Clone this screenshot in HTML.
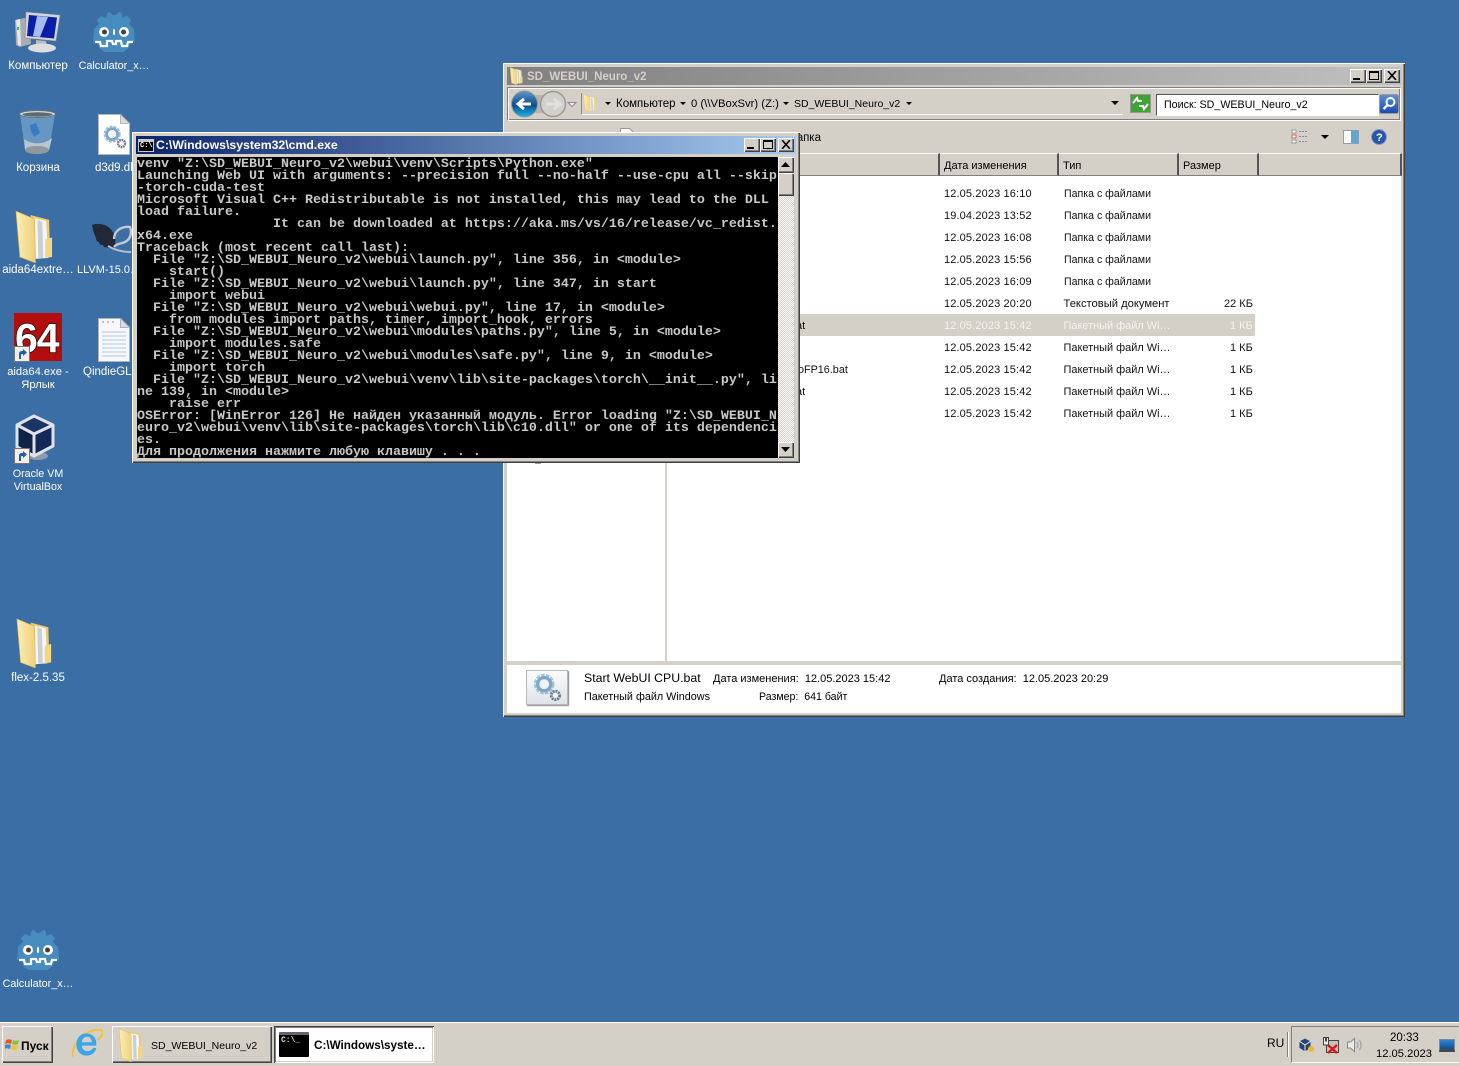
<!DOCTYPE html>
<html lang="ru"><head><meta charset="utf-8"><title>Desktop</title>
<style>
html,body{margin:0;padding:0}
body{width:1459px;height:1066px;position:relative;overflow:hidden;background:#3a6ea5;font-family:"Liberation Sans",sans-serif;font-size:11px;color:#000}
div,span,svg{position:absolute;box-sizing:border-box}
.t{white-space:nowrap;line-height:14px}
.lb{color:#fff;text-align:center;width:76px;line-height:13px;font-size:11.5px;white-space:nowrap;overflow:hidden}
.raised{background:#d4d0c8;box-shadow:inset 1px 1px #fff,inset -1px -1px #404040,inset -2px -2px #808080}
.tb{background:#d4d0c8;width:16px;height:14px;box-shadow:inset 1px 1px #fff,inset -1px -1px #404040,inset -2px -2px #808080}
.row{left:0;width:100%;height:22px;line-height:22px;font-size:11px;color:#111}
.row span{white-space:nowrap;top:0}
.row span.d{left:276px;letter-spacing:.13px}
.row span.f{left:396px;font-size:10.6px}
.row span.p{left:395.5px;font-size:10.95px}
.row span.k{left:562px}
.hd{top:153px;height:23px;background:#d4d0c8;border-right:2px solid #555;border-bottom:1px solid #808080;border-top:1px solid #fff;line-height:24px;font-size:11px;padding-left:4px}
#con{left:137px;top:157px;width:641px;height:301px;padding-top:2px;background:#000;color:#c8c8c8;font:bold 13.33px/12px "Liberation Mono","DejaVu Sans Mono",monospace;white-space:pre;overflow:hidden}
</style></head><body>

<svg width="0" height="0" style="left:0;top:0"><defs>
<linearGradient id="fg" x1="0" y1="0" x2="1" y2="0"><stop offset="0" stop-color="#fbeeb4"/><stop offset="1" stop-color="#efd07c"/></linearGradient>
<symbol id="godot" viewBox="0 0 42 42">
<path d="M14 3L16 .5 20 4H23L27 .5 29 3V7L34 5 38 9 36 13 41 18 42 31H37L36 37 30 41H12L6 37 5 31H0L1 18 6 13 4 9 8 5 13 7z" fill="#478cbf"/>
<path d="M2 31H7L8 35H14V30H19L20 33H23V30H28L29 35H34L35 31H40" fill="none" stroke="#fff" stroke-width="2.2"/>
<circle cx="11" cy="21" r="5" fill="#fff"/><circle cx="31" cy="21" r="5" fill="#fff"/>
<circle cx="11.5" cy="21" r="2.5" fill="#414042"/><circle cx="30.5" cy="21" r="2.5" fill="#414042"/>
<rect x="20" y="18" width="2" height="6" rx="1" fill="#fff"/>
</symbol>
<symbol id="folder" viewBox="0 0 40 54">
<path d="M16 5l19 5 1 38-19 2z" fill="#ecca6c"/>
<path d="M19 8l13 3 2 38-14 1z" fill="#f6f6f6"/>
<path d="M23 10l5 2 1 37-5 0z" fill="#c9cfd2"/>
<path d="M31 30l7-2v20l-7 1z" fill="#f3d67f"/>
<path d="M1 1l19 8 1 45L5 48z" fill="url(#fg)" stroke="#dcb457" stroke-width=".7"/>
</symbol>
<symbol id="gears" viewBox="0 0 32 32">
<circle cx="13" cy="13" r="8.5" fill="none" stroke="#9ec3de" stroke-width="5" stroke-dasharray="3.4 1.2"/>
<circle cx="13" cy="13" r="7" fill="none" stroke="#7fa6c6" stroke-width="3.4"/>
<circle cx="13" cy="13" r="4" fill="#eef3f7"/>
<circle cx="25" cy="25" r="4.5" fill="none" stroke="#6f7f8c" stroke-width="3" stroke-dasharray="2.2 .8"/>
<circle cx="25" cy="25" r="2.2" fill="#eef3f7"/>
</symbol>
<symbol id="sc" viewBox="0 0 16 16">
<rect x=".5" y=".5" width="15" height="15" fill="#f2efe9" stroke="#777"/>
<path d="M5 13V8c0-2 1-3 3-3h1V3l4 3.500-4 3.500V8H8c-1 0-1 .5-1 1v4z" fill="#1d5fb0"/>
</symbol>
</defs></svg>

<!-- Desktop icons -->
<svg style="left:14px;top:10px" width="48" height="44" viewBox="0 0 48 44">
<path d="M1 10l14-3 2 27-11 3-4-2z" fill="#a9adb2"/><path d="M2 10l4-1 1 27-3-1z" fill="#e6e8ea"/><rect x="3" y="17" width="2" height="3" fill="#3c3"/>
<path d="M12 2l34 3-4 26-31-3z" fill="#d2d4d8" stroke="#85898e" stroke-width=".6"/>
<path d="M15 5l28 2.500-3 21-27-2.500z" fill="#0a1fa8"/><path d="M23 6l11 1-8 20-7-1z" fill="#a6bcf2"/>
<path d="M22 30l10 1 1 5-11-1z" fill="#b9bbbd"/><ellipse cx="28" cy="38" rx="14" ry="4.500" fill="#dcdedf"/>
</svg>
<svg style="left:93px;top:11px" width="42" height="42"><use href="#godot"/></svg>
<div class="lb" style="left:0;top:60px">Компьютер</div>
<div class="lb" style="left:76px;top:60px;font-size:10.8px">Calculator_x…</div>

<svg style="left:18px;top:109px" width="40" height="48" viewBox="0 0 40 48">
<path d="M2 5l5 36c4 5 20 5 24 0l6-36z" fill="#6f9fc8" opacity=".85"/>
<path d="M6 30c8 6 20 6 28-1l-3 12c-4 5-20 5-24 0z" fill="#b9c6cf"/>
<path d="M12 16l6-2 4 10-6 4-3-6z" fill="#2f73c4" opacity=".8"/>
<ellipse cx="19.500" cy="5" rx="18" ry="3.500" fill="#cfd6da" stroke="#6b7479"/>
<ellipse cx="19.500" cy="5.500" rx="15" ry="2.200" fill="#5d6a72"/>
<ellipse cx="19" cy="41" rx="12" ry="4" fill="#8f989d"/>
</svg>
<svg style="left:98px;top:114px" width="34" height="42" viewBox="0 0 34 42">
<path d="M.5.5h22l9 9v31H.500z" fill="#fff" stroke="#b5b5b5"/><path d="M22.500.5v9h9z" fill="#ddd" stroke="#b5b5b5"/>
<use href="#gears" x="4" y="10" width="25" height="25"/>
</svg>
<div class="lb" style="left:0;top:162px">Корзина</div>
<div class="t" style="left:95px;top:161px;color:#fff;font-size:11.5px">d3d9.dll</div>

<svg style="left:15px;top:210px" width="39" height="53"><use href="#folder"/></svg>
<svg style="left:92px;top:222px" width="42" height="32" viewBox="0 0 42 32">
<path d="M0 3c8-3 18 0 22 9 2 6 2 11-1 15-2-2-5 0-6-2-1 1-4 0-4-2-3 0-4-1-4-3-2 0-3-2-3-4C2 12 1 8 0 3z" fill="#222837"/>
<path d="M22 17c0-7 6-13 16-12 2 5 1 12-5 15-4 2-8 1-11 5" fill="none" stroke="#c0c8d2" stroke-width="2.400"/>
<path d="M16 24c5 3 12 6 23 6" fill="none" stroke="#b6bcc8" stroke-width="2"/>
</svg>
<div class="lb" style="left:0;top:264px">aida64extre…</div>
<div class="t" style="left:77px;top:263px;color:#fff;font-size:11px">LLVM-15.0…</div>

<div style="left:14px;top:313px;width:48px;height:48px;background:#b30d0d"></div>
<svg style="left:14px;top:313px" width="48" height="48" viewBox="0 0 48 48">
<text x="1" y="39" font-family="Liberation Sans" font-weight="bold" font-size="41" fill="#fff" stroke="#111" stroke-width="1.500" paint-order="stroke" letter-spacing="-1">64</text>
</svg>
<svg style="left:14px;top:346px" width="16" height="16"><use href="#sc"/></svg>
<svg style="left:98px;top:318px" width="32" height="44" viewBox="0 0 32 44">
<path d="M.5.5h22l9 9v34H.5z" fill="#f6f8fb" stroke="#aeb4ba"/><path d="M22.500.5v9h9z" fill="#ddd" stroke="#aeb4ba"/>
<path d="M4 14h24M4 18h24M4 22h24M4 26h24M4 30h24M4 34h24M4 38h24" stroke="#b7c9de"/>
<path d="M4 4h2M9 4h2M14 4h2" stroke="#888"/>
</svg>
<div class="lb" style="left:0;top:366px;font-size:11.2px">aida64.exe -<br>Ярлык</div>
<div class="t" style="left:83px;top:365px;color:#fff;font-size:11.5px">QindieGL.l</div>

<svg style="left:14px;top:414px" width="44" height="48" viewBox="0 0 44 48">
<ellipse cx="24" cy="42" rx="10" ry="4" fill="#8d9aa8"/>
<path d="M3 11L20 20V42L3 33z" fill="#0f2347"/><path d="M39 11L20 20V42L39 32z" fill="#14295a"/>
<path d="M20 2L39 11 20 20 3 11z" fill="#1c3564"/>
<path d="M20 2L39 11V32L20 42 3 33V11zM3 11L20 20 39 11M20 20V42" fill="none" stroke="#dfe3e9" stroke-width="3" stroke-linejoin="round"/>
</svg>
<svg style="left:14px;top:448px" width="16" height="16"><use href="#sc"/></svg>
<div class="lb" style="left:0;top:468px;font-size:10.7px">Oracle VM<br>VirtualBox</div>

<svg style="left:16px;top:618px" width="37" height="50"><use href="#folder"/></svg>
<div class="lb" style="left:0;top:672px">flex-2.5.35</div>

<svg style="left:17px;top:929px" width="42" height="42"><use href="#godot"/></svg>
<div class="lb" style="left:0;top:978px;font-size:10.8px">Calculator_x…</div>

<!-- Explorer -->
<div class="raised" style="left:503px;top:63px;width:902px;height:654px"></div>
<div style="left:507px;top:67px;width:894px;height:18px;background:linear-gradient(90deg,#808080,#c0c0c0)"></div>
<svg style="left:509px;top:67px" width="15" height="18"><use href="#folder"/></svg>
<div class="t" style="left:527px;top:70px;color:#d4d0c8;font-weight:bold;font-size:11.500px">SD_WEBUI_Neuro_v2</div>
<div class="tb" style="left:1350px;top:69px"></div><div style="left:1353px;top:78px;width:7px;height:2px;background:#000"></div>
<div class="tb" style="left:1366px;top:69px"></div><div style="left:1369px;top:71px;width:10px;height:9px;border:1px solid #000;border-top-width:2px"></div>
<div class="tb" style="left:1384px;top:69px"></div>
<svg style="left:1387px;top:71px" width="10" height="9"><path d="M1 0l8 9M9 0L1 9" stroke="#000" stroke-width="1.600"/></svg>

<div style="left:507px;top:87px;width:894px;height:34px;border:1px solid;border-color:#808080 #fff #fff #808080;background:#d4d0c8;box-shadow:inset 1px 1px #fff,inset -1px -1px #808080"></div>
<svg style="left:510px;top:90px" width="72" height="28" viewBox="0 0 72 28">
<defs><linearGradient id="bb" x1="0" y1="0" x2="0" y2="1"><stop offset="0" stop-color="#5f97c8"/><stop offset=".55" stop-color="#0c4d8e"/><stop offset="1" stop-color="#19b6ea"/></linearGradient></defs>
<rect x="14" y="5" width="30" height="18" fill="#b9b6ae"/>
<circle cx="14.500" cy="14" r="13" fill="url(#bb)" stroke="#9a988f"/>
<path d="M21 14H10M14 9l-6 5 6 5" fill="none" stroke="#fff" stroke-width="3"/>
<circle cx="43" cy="14" r="12.500" fill="#d2d0cb" stroke="#9c9a94" stroke-width="1.500"/>
<path d="M36 14h12M44 9l6 5-6 5" fill="none" stroke="#e2e1dc" stroke-width="3"/>
<path d="M58 12.500h8l-4 4z" fill="#f2f2f2" stroke="#8a8a8a"/>
</svg>
<div style="left:581px;top:93px;width:542px;height:22px;background:#d4d0c8;border-left:1px solid #8a8a8a;border-bottom:1px solid #fff"></div>
<svg style="left:583px;top:94px" width="14" height="18"><use href="#folder"/></svg>
<div class="t" style="left:616px;top:97px;font-size:11.500px">Компьютер</div>
<div class="t" style="left:691px;top:97px;font-size:11.3px">0 (\\VBoxSvr) (Z:)</div>
<div class="t" style="left:794px;top:97px;font-size:10.5px">SD_WEBUI_Neuro_v2</div>
<svg style="left:600px;top:99px" width="320" height="10"><g fill="#000"><path d="M5 3h6l-3 3z"/><path d="M80 3h6l-3 3z"/><path d="M183 3h6l-3 3z"/><path d="M306 3h6l-3 3z"/></g></svg>
<svg style="left:1111px;top:101px" width="10" height="6"><path d="M0 0h8L4 4z" fill="#000"/></svg>
<svg style="left:1130px;top:94px" width="21" height="19" viewBox="0 0 21 19">
<rect x=".5" y=".5" width="20" height="18" fill="#3fa33a" stroke="#9a988f"/>
<path d="M3 9l4-5 1 3h4M18 10l-4 5-1-3H9" fill="none" stroke="#fff" stroke-width="2"/>
</svg>
<div style="left:1156px;top:94px;width:223px;height:22px;background:#fff;border:1px solid;border-color:#555 #fff #fff #555"></div>
<div class="t" style="left:1164px;top:98px;font-size:10.7px">Поиск: SD_WEBUI_Neuro_v2</div>
<svg style="left:1379px;top:94px" width="20" height="20" viewBox="0 0 20 20">
<defs><linearGradient id="sb" x1="0" y1="0" x2="0" y2="1"><stop offset="0" stop-color="#5b8fdf"/><stop offset="1" stop-color="#174bb0"/></linearGradient></defs>
<rect x=".5" y=".5" width="19" height="19" rx="2" fill="url(#sb)" stroke="#9c9a94"/>
<circle cx="11.500" cy="8" r="4" fill="none" stroke="#fff" stroke-width="2"/><path d="M8.500 11l-4 4" stroke="#fff" stroke-width="2.400"/>
</svg>

<div style="left:507px;top:121px;width:894px;height:32px;background:#d4d0c8"></div>
<svg style="left:620px;top:128px" width="16" height="8"><path d="M.5 8V.5h9l4 4V8" fill="#fff" stroke="#999"/></svg>
<div class="t" style="left:800px;top:131px;width:21px;overflow:hidden;font-size:11.500px;direction:rtl">апка</div>
<svg style="left:1291px;top:129px" width="100" height="16" viewBox="0 0 100 16">
<g fill="none" stroke="#7d8ea3"><path d="M8 2.500h8M8 7.500h8M8 12.500h8" stroke-dasharray="2 1"/></g>
<rect x="1" y="1" width="4" height="3" fill="#fff" stroke="#7a7a7a" stroke-width=".7"/><rect x="1" y="6" width="4" height="3" fill="#fff" stroke="#c33" stroke-width=".7"/><rect x="1" y="11" width="4" height="3" fill="#fff" stroke="#7a7a7a" stroke-width=".7"/>
<path d="M30 6h8l-4 4z" fill="#000"/>
<rect x="52.500" y="1.500" width="15" height="13" fill="#fff" stroke="#8aa0b5"/><rect x="60" y="2" width="7" height="12" fill="#5fa5d8"/>
<circle cx="88" cy="8" r="7.500" fill="#2a56a8" stroke="#8aa0c5"/>
<text x="85" y="12" font-family="Liberation Sans" font-weight="bold" font-size="11" fill="#fff">?</text>
</svg>

<div class="hd" style="left:507px;width:433px"></div>
<div class="hd" style="left:940px;width:119px">Дата изменения</div>
<div class="hd" style="left:1059px;width:120px">Тип</div>
<div class="hd" style="left:1179px;width:80px">Размер</div>
<div class="hd" style="left:1259px;width:143px"></div>

<div style="left:507px;top:176px;width:894px;height:485px;background:#fff"></div>
<div style="left:665px;top:176px;width:2px;height:485px;background:#d4d0c8"></div>
<div style="left:668px;top:314px;width:587px;height:22px;background:#d4d0c8"></div>
<div style="left:535px;top:458px;width:6px;height:6px;border-bottom:1px solid #999"></div>

<div style="left:668px;top:183px;width:733px;height:242px">
<div class="row" style="top:0"><span class="d">12.05.2023 16:10</span><span class="f">Папка с файлами</span></div>
<div class="row" style="top:22px"><span class="d">19.04.2023 13:52</span><span class="f">Папка с файлами</span></div>
<div class="row" style="top:44px"><span class="d">12.05.2023 16:08</span><span class="f">Папка с файлами</span></div>
<div class="row" style="top:66px"><span class="d">12.05.2023 15:56</span><span class="f">Папка с файлами</span></div>
<div class="row" style="top:88px"><span class="d">12.05.2023 16:09</span><span class="f">Папка с файлами</span></div>
<div class="row" style="top:110px"><span class="d">12.05.2023 20:20</span><span class="p" style="font-size:11.2px">Текстовый документ</span><span style="left:556px">22 КБ</span></div>
<div class="row" style="top:132px;color:#f4f3ef"><span style="left:128px;color:#111">at</span><span class="d">12.05.2023 15:42</span><span class="p">Пакетный файл Wi…</span><span class="k">1 КБ</span></div>
<div class="row" style="top:154px"><span class="d">12.05.2023 15:42</span><span class="p">Пакетный файл Wi…</span><span class="k">1 КБ</span></div>
<div class="row" style="top:176px"><span style="left:130px;font-size:10.8px">oFP16.bat</span><span class="d">12.05.2023 15:42</span><span class="p">Пакетный файл Wi…</span><span class="k">1 КБ</span></div>
<div class="row" style="top:198px"><span style="left:128px">at</span><span class="d">12.05.2023 15:42</span><span class="p">Пакетный файл Wi…</span><span class="k">1 КБ</span></div>
<div class="row" style="top:220px"><span class="d">12.05.2023 15:42</span><span class="p">Пакетный файл Wi…</span><span class="k">1 КБ</span></div>
</div>

<div style="left:507px;top:661px;width:894px;height:4px;background:#d4d0c8"></div>
<div style="left:507px;top:665px;width:894px;height:48px;background:#fff"></div>
<div style="left:526px;top:670px;width:42px;height:35px;background:linear-gradient(#fbfbfb,#dfe3e8);border:1px solid #b5b8bb;box-shadow:1px 1px 1px #888"></div>
<svg style="left:532px;top:672px" width="30" height="30"><use href="#gears"/></svg>
<div class="t" style="left:584px;top:671px;font-size:12.3px">Start WebUI CPU.bat</div>
<div class="t" style="left:713px;top:672px">Дата изменения:&nbsp; 12.05.2023 15:42</div>
<div class="t" style="left:939px;top:672px">Дата создания:&nbsp; 12.05.2023 20:29</div>
<div class="t" style="left:584px;top:690px;font-size:10.8px">Пакетный файл Windows</div>
<div class="t" style="left:759px;top:690px;font-size:10.6px">Размер:&nbsp; 641 байт</div>

<!-- CMD -->
<div class="raised" style="left:132px;top:132px;width:668px;height:331px"></div>
<div style="left:136px;top:136px;width:660px;height:18px;background:linear-gradient(90deg,#0a246a,#a6caf0)"></div>
<div style="left:138px;top:139px;width:16px;height:13px;background:#000;border:1px solid #c8c8c8;border-top-width:3px"></div>
<div class="t" style="left:140px;top:142px;color:#fff;font:bold 7px/9px 'Liberation Mono',monospace">C:\</div>
<div class="t" style="left:156px;top:138px;color:#fff;font:bold 12.25px/14px 'Liberation Sans',sans-serif">C:\Windows\system32\cmd.exe</div>
<div class="tb" style="left:744px;top:138px"></div><div style="left:747px;top:147px;width:7px;height:2px;background:#000"></div>
<div class="tb" style="left:760px;top:138px"></div><div style="left:763px;top:140px;width:10px;height:9px;border:1px solid #000;border-top-width:2px"></div>
<div class="tb" style="left:778px;top:138px"></div>
<svg style="left:781px;top:140px" width="10" height="9"><path d="M1 0l8 9M9 0L1 9" stroke="#000" stroke-width="1.600"/></svg>
<div id="con">venv "Z:\SD_WEBUI_Neuro_v2\webui\venv\Scripts\Python.exe"
Launching Web UI with arguments: --precision full --no-half --use-cpu all --skip
-torch-cuda-test
Microsoft Visual C++ Redistributable is not installed, this may lead to the DLL
load failure.
                 It can be downloaded at https://aka.ms/vs/16/release/vc_redist.
x64.exe
Traceback (most recent call last):
  File "Z:\SD_WEBUI_Neuro_v2\webui\launch.py", line 356, in &lt;module&gt;
    start()
  File "Z:\SD_WEBUI_Neuro_v2\webui\launch.py", line 347, in start
    import webui
  File "Z:\SD_WEBUI_Neuro_v2\webui\webui.py", line 17, in &lt;module&gt;
    from modules import paths, timer, import_hook, errors
  File "Z:\SD_WEBUI_Neuro_v2\webui\modules\paths.py", line 5, in &lt;module&gt;
    import modules.safe
  File "Z:\SD_WEBUI_Neuro_v2\webui\modules\safe.py", line 9, in &lt;module&gt;
    import torch
  File "Z:\SD_WEBUI_Neuro_v2\webui\venv\lib\site-packages\torch\__init__.py", li
ne 139, in &lt;module&gt;
    raise err
OSError: [WinError 126] Не найден указанный модуль. Error loading "Z:\SD_WEBUI_N
euro_v2\webui\venv\lib\site-packages\torch\lib\c10.dll" or one of its dependenci
es.
Для продолжения нажмите любую клавишу . . .</div>
<div style="left:778px;top:157px;width:16px;height:301px;background:repeating-conic-gradient(#fff 0 25%,#d4d0c8 0 50%) 0 0/2px 2px"></div>
<div class="raised" style="left:778px;top:157px;width:16px;height:16px"></div>
<svg style="left:781px;top:162px" width="10" height="6"><path d="M4.500 0l4.500 5H0z" fill="#000"/></svg>
<div class="raised" style="left:778px;top:173px;width:16px;height:23px"></div>
<div class="raised" style="left:778px;top:442px;width:16px;height:16px"></div>
<svg style="left:781px;top:447px" width="10" height="6"><path d="M0 0h9L4.500 5z" fill="#000"/></svg>

<!-- Taskbar -->
<div style="left:0;top:1022px;width:1459px;height:44px;background:#d4d0c8;border-top:1px solid #fff"></div>
<div class="raised" style="left:2px;top:1026px;width:51px;height:37px"></div>
<svg style="left:5px;top:1037px" width="15" height="14" viewBox="0 0 15 14">
<path d="M1 3c2-1 4-1 6 0L6 7C4 6 2 6 0 7z" fill="#e8572a"/><path d="M8 3c2 1 4 1 6 0l-1 4c-2 1-4 1-6 0z" fill="#8ebd3c"/>
<path d="M0 8c2-1 4-1 6 0l-1 4c-2-1-4-1-6 0z" fill="#3b8ad9"/><path d="M7 8c2 1 4 1 6 0l-1 4c-2 1-4 1-6 0z" fill="#f4c02e"/>
</svg>
<div class="t" style="left:21px;top:1039px;font-weight:bold;font-size:12px">Пуск</div>
<svg style="left:72px;top:1029px" width="31" height="31" viewBox="2 2 28 28">
<path d="M3 27C0 21 9 6 22 3c5-1 8 0 8 2 0 3-3 5-5 7" fill="none" stroke="#f2c33c" stroke-width="2"/>
<path d="M6 16c0-6 4-10 9-10s9 4 9 9v2H11c0 3 2 5 5 5 2 0 4-1 5-3h3c-1 5-5 7-9 7-5 0-9-4-9-10zm5-2h9c0-3-2-5-4-5-3 0-5 2-5 5z" fill="#3aa6ea"/>
</svg>
<div class="raised" style="left:112px;top:1026px;width:160px;height:37px"></div>
<svg style="left:118px;top:1028px" width="26" height="34"><use href="#folder"/></svg>
<div class="t" style="left:151px;top:1039px;font-size:10.5px">SD_WEBUI_Neuro_v2</div>
<div style="left:274px;top:1026px;width:160px;height:37px;background:#fff;box-shadow:inset 1px 1px #404040,inset -1px -1px #fff,inset 2px 2px #808080,inset -2px -2px #d4d0c8"></div>
<div style="left:279px;top:1032px;width:30px;height:25px;background:#000;border-top:3px solid #666;border-radius:1px"></div>
<div class="t" style="left:281px;top:1036px;color:#ddd;font:bold 8px/10px 'Liberation Mono',monospace">C:\_</div>
<div class="t" style="left:314px;top:1039px;font-weight:bold;font-size:11.7px">C:\Windows\syste…</div>

<div class="t" style="left:1267px;top:1036px;font-size:12px">RU</div>
<div style="left:1287px;top:1032px;width:2px;height:25px;background:#fff;border-left:1px solid #808080"></div>
<div style="left:1291px;top:1026px;width:170px;height:37px;border:1px solid;border-color:#808080 #fff #fff #808080"></div>
<svg style="left:1298px;top:1037px" width="16" height="16" viewBox="0 0 16 16">
<path d="M7 1l6 3v7l-6 4-6-4V4z" fill="#27446e" stroke="#c5ccd6"/><path d="M7 8v7M1 4l6 4 6-4" stroke="#dfe4ea" fill="none"/><circle cx="13" cy="12" r="3" fill="#f2b731"/>
</svg>
<svg style="left:1322px;top:1036px" width="18" height="18" viewBox="0 0 18 18">
<rect x="4.500" y="4.500" width="12" height="12" fill="#c6c3bb" stroke="#444"/><path d="M1.500 9V1.500h2V5h1V1.500h2V9z" fill="#eee" stroke="#444"/>
<path d="M6 9l9 8M15 9l-9 8" stroke="#e01616" stroke-width="2.500"/>
</svg>
<svg style="left:1346px;top:1037px" width="17" height="16" viewBox="0 0 17 16">
<path d="M1.500 5h3L8.500 1.500v13L4.500 11h-3z" fill="#eceae4" stroke="#888"/>
<path d="M11 5c1 2 1 4 0 6M13.500 3c2 3 2 7 0 10" fill="none" stroke="#a5a5a5" stroke-width="1.300"/>
</svg>
<div class="t" style="left:1390px;top:1031px;font-size:11.500px">20:33</div>
<div class="t" style="left:1376px;top:1047px;font-size:11.2px">12.05.2023</div>
<div style="left:1439px;top:1039px;width:16px;height:13px;background:linear-gradient(#2f84cf,#0f4f95);border:1px solid #7d8b99;border-bottom:3px solid #44484c"></div>
</body></html>
